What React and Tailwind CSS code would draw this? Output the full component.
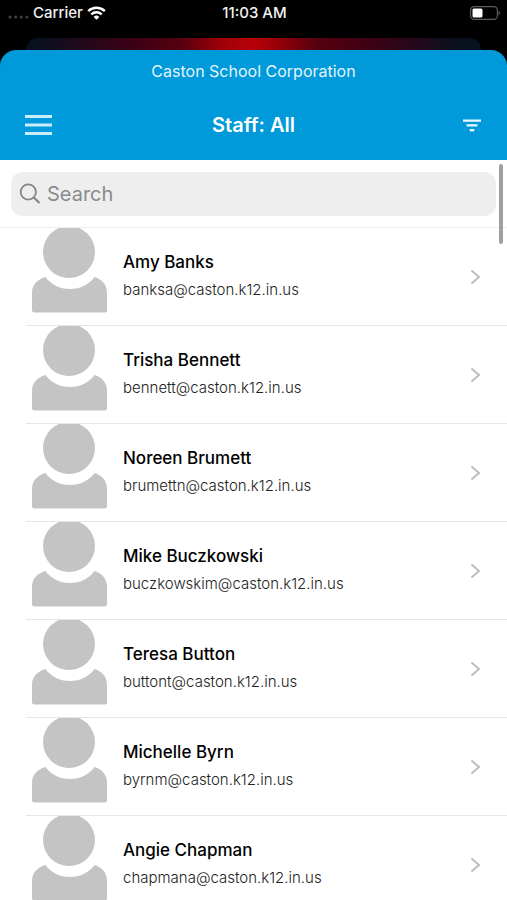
import React, { useState } from "react";

const staff = [
  { name: "Amy Banks", email: "banksa@caston.k12.in.us" },
  { name: "Trisha Bennett", email: "bennett@caston.k12.in.us" },
  { name: "Noreen Brumett", email: "brumettn@caston.k12.in.us" },
  { name: "Mike Buczkowski", email: "buczkowskim@caston.k12.in.us" },
  { name: "Teresa Button", email: "buttont@caston.k12.in.us" },
  { name: "Michelle Byrn", email: "byrnm@caston.k12.in.us" },
  { name: "Angie Chapman", email: "chapmana@caston.k12.in.us" },
];

function WifiIcon() {
  return (
    <svg width="19" height="14" viewBox="0 0 19 14" fill="none" stroke="white">
      <path d="M1.2 5.1a12 12 0 0 1 16.6 0" strokeWidth="2.4" />
      <path d="M4.3 8.3a7.6 7.6 0 0 1 10.4 0" strokeWidth="2.3" />
      <path d="M9.5 13.8 6.6 10.9a4.2 4.2 0 0 1 5.8 0z" fill="white" stroke="none" />
    </svg>
  );
}

function BatteryIcon() {
  return (
    <svg width="31" height="14" viewBox="0 0 31 14" fill="none">
      <rect x="0.6" y="0.6" width="26.8" height="12.8" rx="3.6" stroke="#5c5c5c" strokeWidth="1.2" />
      <rect x="2.5" y="2.5" width="10" height="9" rx="1.5" fill="white" />
      <path d="M28.6 4.8c1.6.5 1.6 3.9 0 4.4z" fill="#6b6b6b" />
    </svg>
  );
}

function StatusBar() {
  return (
    <div className="grid grid-cols-3 items-center h-[26px] pl-2 pr-1.5 text-[15px] leading-5 font-medium text-[#f2f2f2]">
      <div className="flex items-center">
        <svg width="21" height="4" viewBox="0 0 21 4" fill="#424242" className="mt-2">
          <circle cx="2" cy="2" r="1.5" />
          <circle cx="7.6" cy="2" r="1.5" />
          <circle cx="13.2" cy="2" r="1.5" />
          <circle cx="18.8" cy="2" r="1.5" />
        </svg>
        <span className="ml-1 mr-1">Carrier</span>
        <WifiIcon />
      </div>
      <div className="text-center">11:03 AM</div>
      <div className="flex justify-end">
        <BatteryIcon />
      </div>
    </div>
  );
}

function Header() {
  return (
    <header className="bg-[#0099d9] rounded-t-2xl h-[110px] text-white">
      <p className="pt-[11px] text-center text-base leading-5 text-[#e2f5fd]">
        Caston School Corporation
      </p>
      <div className="mt-6 px-6 flex items-center justify-between h-10">
        <button aria-label="Menu" className="w-12">
          <svg width="29" height="20" viewBox="0 0 29 20" fill="#c9ecfb">
            <rect x="1" y="0" width="27" height="3" />
            <rect x="1" y="8.5" width="27" height="3" />
            <rect x="1" y="17" width="27" height="3" />
          </svg>
        </button>
        <h1 className="text-xl leading-6 font-semibold">Staff: All</h1>
        <button aria-label="Filter" className="w-12 flex justify-end pr-0.5">
          <svg width="18" height="13" viewBox="0 0 18 13" fill="#e8f7fd">
            <rect x="0" y="0.5" width="18" height="2.3" />
            <rect x="3.5" y="5.2" width="11" height="2.3" />
            <rect x="6.7" y="10" width="4.6" height="2.3" />
          </svg>
        </button>
      </div>
    </header>
  );
}

function Avatar() {
  return (
    <svg width="75" height="85" viewBox="0 0 75 85" fill="#c4c4c4" className="shrink-0">
      <circle cx="37" cy="24" r="26" />
      <path d="M13.5 49C5 51.5 0 57 0 65v17q0 2.5 2.5 2.5h70q2.5 0 2.5-2.5V65c0-8-4.5-13.5-12.5-16C57 56.5 48.5 61 38 61S19 56.5 13.5 49z" />
    </svg>
  );
}

function StaffRow({ person }) {
  return (
    <li className="ml-[26px] h-[98px] border-b border-[#e6e6e6] overflow-hidden">
      <a href="#" className="flex h-full items-start pl-1.5 pr-6">
        <Avatar />
        <div className="flex-1 pl-4 pt-[22px]">
          <p className="text-[17px] leading-6 font-medium text-black">{person.name}</p>
          <p className="mt-1 text-[15px] leading-6 font-light text-[#222222]">
            {person.email}
          </p>
        </div>
        <svg
          width="14"
          height="18"
          viewBox="0 0 14 18"
          fill="none"
          stroke="#bdbdbd"
          strokeWidth="2"
          className="self-center"
        >
          <path d="M2.5 2.5 10 9l-7.500 6.500" />
        </svg>
      </a>
    </li>
  );
}

function App() {
  const [search, setSearch] = useState("");

  const results = staff.filter((person) =>
    person.name.toLowerCase().includes(search.toLowerCase())
  );

  return (
    <div className="h-screen flex flex-col bg-black font-['Inter',sans-serif]">
      <StatusBar />
      {/* edge of the screen behind the sheet */}
      <div className="mt-3 mx-[26px] h-3 rounded-t-xl bg-[linear-gradient(to_right,#07111f_2%,#3d0014_24%,#55000f_34%,#a00008_43%,#b80008_50%,#a00008_54%,#55000f_64%,#3d0014_76%,#07111f_96%)]" />
      <Header />
      <main className="relative flex-1 min-h-0 flex flex-col bg-white">
        <div className="px-[11px] pt-3 pb-[11px] border-b border-[#efefef]">
          <label className="flex items-center h-11 rounded-xl bg-[#eeeeee] pl-2 pr-3">
            <svg
              width="22"
              height="22"
              viewBox="0 0 22 22"
              fill="none"
              stroke="#868689"
              strokeWidth="1.8"
              className="shrink-0"
            >
              <circle cx="9.3" cy="9" r="7.6" />
              <path d="M14.8 14.5 20.5 20" strokeWidth="2.2" />
            </svg>
            <input
              type="search"
              aria-label="Search"
              placeholder="Search"
              value={search}
              onChange={(e) => setSearch(e.target.value)}
              className="ml-1.5 flex-1 min-w-0 bg-transparent text-xl leading-7 outline-none placeholder:text-[#8a8a8e]"
            />
          </label>
        </div>
        <ul className="flex-1 min-h-0 overflow-y-auto [scrollbar-width:none]">
          {results.map((person) => (
            <StaffRow key={person.email} person={person} />
          ))}
        </ul>
        <div className="absolute right-1 top-1 w-1 h-20 rounded-full bg-[#a0a0a0]" />
      </main>
    </div>
  );
}

export default App;
